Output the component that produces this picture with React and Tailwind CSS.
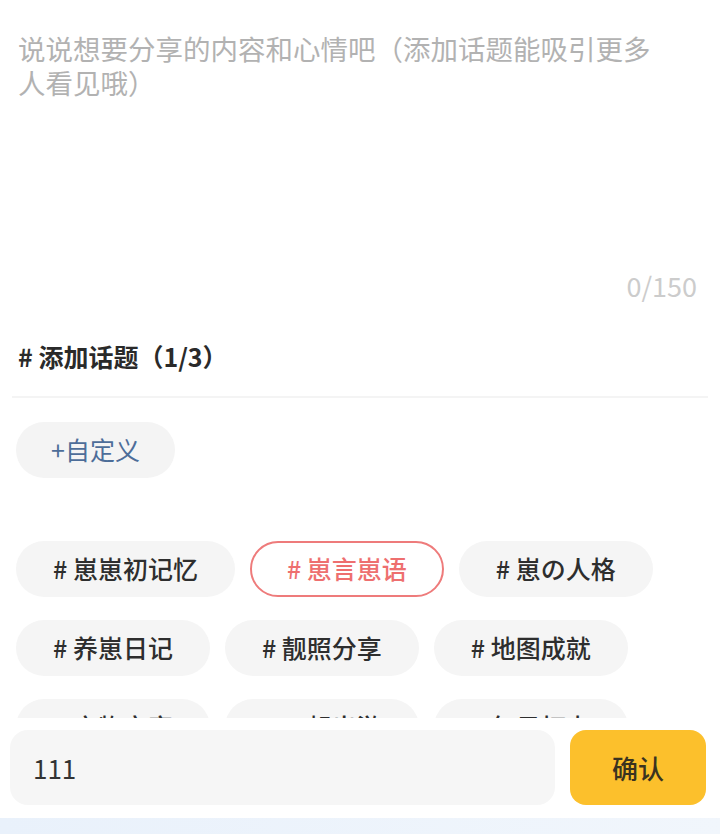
import React from "react";

const font = { fontFamily: '"Noto Sans CJK SC", "Noto Sans", sans-serif' };

const rows = [
  [
    { t: "崽崽初记忆" },
    { t: "崽言崽语", active: true },
    { t: "崽の人格" },
  ],
  [{ t: "养崽日记" }, { t: "靓照分享" }, { t: "地图成就" }],
  [{ t: "宠物安家" }, { t: "一起出游" }, { t: "每日打卡" }],
];

function Chip({ t, active }) {
  return (
    <div
      className={
        active
          ? "h-14 px-[35px] rounded-full border-2 border-[#ee7b7b] text-[#ee6f6f] flex items-center text-[25px] font-medium whitespace-nowrap"
          : "h-14 px-[37px] rounded-full bg-[#f5f5f5] text-[#2e2e2e] flex items-center text-[25px] font-medium whitespace-nowrap"
      }
    >
      # {t}
    </div>
  );
}

export default function App() {
  return (
    <div
      className="w-[720px] h-[834px] bg-white flex flex-col overflow-hidden"
      style={font}
    >
      <div className="h-[318px] shrink-0 px-[18px] pt-[31px] flex flex-col">
        <p className="text-[27.5px] leading-[34px] text-[#b2b2b2] pr-[40px]">
          说说想要分享的内容和心情吧（添加话题能吸引更多人看见哦）
        </p>
        <div className="mt-auto mb-[15px] self-end pr-[5px] text-[27px] leading-[34px] text-[#cccccc]">
          0/150
        </div>
      </div>

      <div className="shrink-0 px-[18px] mt-[19px] h-[40px] flex items-center text-[25px] font-bold text-[#2a2a2a]">
        # 添加话题（1/3）
      </div>
      <div className="shrink-0 mx-[12px] mt-[19px] h-[2px] bg-[#f4f4f4]" />

      <div className="shrink-0 px-[16px] pt-[24px]">
        <div className="h-14 inline-flex items-center px-[35px] rounded-full bg-[#f4f4f4] text-[25px] text-[#4d6d99]">
          +自定义
        </div>
      </div>

      <div className="flex-1 min-h-0 overflow-hidden px-[16px] pt-[63px] flex flex-col gap-[23px]">
        {rows.map((r, i) => (
          <div key={i} className="flex gap-[15px] shrink-0">
            {r.map((c) => (
              <Chip key={c.t} {...c} />
            ))}
          </div>
        ))}
      </div>

      <div className="shrink-0 pt-[12px] bg-white">
        <div className="flex gap-[15px] pl-[10px] pr-[14px]">
          <div className="flex-1 h-[75px] rounded-[18px] bg-[#f6f6f6] flex items-center pl-[23px] text-[26px] text-[#333333]">
            111
          </div>
          <div className="w-[136px] h-[75px] rounded-[16px] bg-[#fcc02c] flex items-center justify-center text-[26px] font-medium text-[#3a3320]">
            确认
          </div>
        </div>
        <div className="h-[13px]" />
        <div className="h-[16px] bg-gradient-to-r from-[#e9f1fb] to-[#f1f6fc]" />
      </div>
    </div>
  );
}
